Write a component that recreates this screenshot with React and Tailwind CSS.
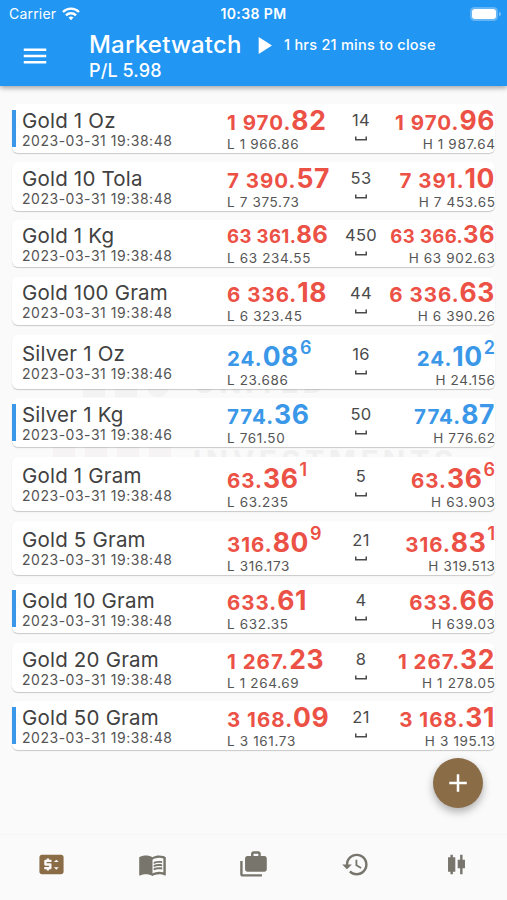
import {
  MdAdd,
  MdCandlestickChart,
  MdHistory,
  MdMenu,
  MdMenuBook,
  MdPlayArrow,
  MdPriceChange,
} from "react-icons/md";

const QUOTES = [
  { name: "Gold 1 Oz", time: "19:38:48", bid: ["1 970.", "82"], low: "1 966.86", spread: 14, ask: ["1 970.", "96"], high: "1 987.64", marked: true, box: "h-[49px] mb-[9px]" },
  { name: "Gold 10 Tola", time: "19:38:48", bid: ["7 390.", "57"], low: "7 375.73", spread: 53, ask: ["7 391.", "10"], high: "7 453.65", box: "h-[49px] mb-[9px]" },
  { name: "Gold 1 Kg", time: "19:38:48", bid: ["63 361.", "86"], low: "63 234.55", spread: 450, ask: ["63 366.", "36"], high: "63 902.63", compact: true, box: "h-[47px] mb-[10px]" },
  { name: "Gold 100 Gram", time: "19:38:48", bid: ["6 336.", "18"], low: "6 323.45", spread: 44, ask: ["6 336.", "63"], high: "6 390.26", box: "h-[48px] mb-[10px]" },
  { name: "Silver 1 Oz", time: "19:38:46", bid: ["24.", "08", "6"], low: "23.686", spread: 16, ask: ["24.", "10", "2"], high: "24.156", up: true, box: "h-[54px] mb-[9px]" },
  { name: "Silver 1 Kg", time: "19:38:46", bid: ["774.", "36"], low: "761.50", spread: 50, ask: ["774.", "87"], high: "776.62", up: true, marked: true, box: "h-[49px] mb-[10px]" },
  { name: "Gold 1 Gram", time: "19:38:48", bid: ["63.", "36", "1"], low: "63.235", spread: 5, ask: ["63.", "36", "6"], high: "63.903", box: "h-[54px] mb-[10px]" },
  { name: "Gold 5 Gram", time: "19:38:48", bid: ["316.", "80", "9"], low: "316.173", spread: 21, ask: ["316.", "83", "1"], high: "319.513", box: "h-[54px] mb-[9px]" },
  { name: "Gold 10 Gram", time: "19:38:48", bid: ["633.", "61"], low: "632.35", spread: 4, ask: ["633.", "66"], high: "639.03", marked: true, box: "h-[49px] mb-[10px]" },
  { name: "Gold 20 Gram", time: "19:38:48", bid: ["1 267.", "23"], low: "1 264.69", spread: 8, ask: ["1 267.", "32"], high: "1 278.05", box: "h-[49px] mb-[9px]" },
  { name: "Gold 50 Gram", time: "19:38:48", bid: ["3 168.", "09"], low: "3 161.73", spread: 21, ask: ["3 168.", "31"], high: "3 195.13", marked: true, box: "h-[49px]" },
];

const Price = ({ parts, up, compact }) => {
  const [whole, cents, pip] = parts;

  return (
    <div
      className={`mb-[2px] flex items-baseline whitespace-pre font-bold leading-none ${
        up ? "text-[#3b97e8]" : "text-[#ec5146]"
      }`}
    >
      <span className={compact ? "text-[18.5px] tracking-[0.4px]" : "text-[20.5px] tracking-[1px]"}>
        {whole}
      </span>
      <span className={compact ? "text-[24px] tracking-[0.4px]" : "text-[26.5px] tracking-[0.6px]"}>
        {cents}
      </span>
      {pip && <span className="relative -top-3 ml-px text-[18px] font-semibold">{pip}</span>}
    </div>
  );
};

const QuoteRow = ({ quote }) => (
  <div
    className={`flex shrink-0 rounded-md bg-white shadow-[0_1px_1px_rgba(0,0,0,0.2)] ${quote.box}`}
  >
    <div className="flex w-[215px] shrink-0 items-center">
      <div className={`h-[37px] w-1 ${quote.marked ? "bg-[#3b97e8]" : ""}`} />
      <div className="ml-1.5 whitespace-nowrap">
        <div className="text-[20.5px] leading-[23px] tracking-[0.2px] text-[#414141]">{quote.name}</div>
        <div className="text-[14px] leading-[17px] tracking-[0.52px] text-[#555]">2023-03-31 {quote.time}</div>
      </div>
    </div>

    <div className="flex w-[104px] shrink-0 flex-col items-start justify-end whitespace-nowrap">
      <Price parts={quote.bid} up={quote.up} compact={quote.compact} />
      <div className="text-[13.5px] leading-[18px] tracking-[0.65px] text-[#555]">L {quote.low}</div>
    </div>

    <div className="flex w-[60px] shrink-0 flex-col items-center justify-center pb-0.5 text-[#4a4a4a]">
      <div className="text-[16.5px] leading-[20px] tracking-[0.3px]">{quote.spread}</div>
      <svg viewBox="0 0 12 5" className="mt-[6px] mb-1 h-[5px] w-3" fill="none" stroke="currentColor" strokeWidth="1.5">
        <path d="M.75 .5V3.750H11.250V.5" />
      </svg>
    </div>

    <div className="flex min-w-0 flex-1 flex-col items-end justify-end whitespace-nowrap">
      <Price parts={quote.ask} up={quote.up} compact={quote.compact} />
      <div className="-mr-[0.6px] text-[13.5px] leading-[18px] tracking-[0.65px] text-[#555]">H {quote.high}</div>
    </div>
  </div>
);

const Header = () => (
  <header className="relative h-[86px] shrink-0 bg-[#2196f3] text-white shadow-[0_2px_5px_rgba(0,0,0,0.35)]">
    <div className="flex h-[27px] items-center justify-between pl-[9px] pr-[6px]">
      <div className="flex w-[180px] items-center gap-1.5 text-[14px] tracking-[0.2px]">
        Carrier
        <svg viewBox="0 0 18 14" className="h-[14px] w-[18px]" fill="none" stroke="currentColor" strokeWidth="2.4">
          <path d="M1 5C5.500 .5 12.500 .5 17 5" />
          <path d="M4 8.300C6.800 5.500 11.200 5.500 14 8.300" />
          <path d="M6.500 10.500Q9 8.500 11.500 10.500L9 13.200Z" fill="currentColor" stroke="none" />
        </svg>
      </div>
      <div className="text-[14px] font-semibold tracking-[0.4px]">10:38 PM</div>
      <div className="flex w-[183px] items-center justify-end">
        <div className="h-[14px] w-[28px] rounded-[4.5px] bg-white/30 p-[2px]">
          <div className="h-full rounded-[3px] bg-white" />
        </div>
        <div className="ml-px h-1 w-0.5 rounded-r bg-white/40" />
      </div>
    </div>
    <div className="flex pl-[20px] pt-px">
      <MdMenu className="mt-[13px] size-[30px]" />
      <div className="ml-[39px]">
        <div className="flex h-[34px] items-center">
          <h1 className="w-[160px] text-[24px] font-medium tracking-[0.2px]">Marketwatch</h1>
          <MdPlayArrow className="size-[29px]" />
          <span className="ml-1.5 text-[14.5px] font-medium tracking-[0.25px]">1 hrs 21 mins to close</span>
        </div>
        <div className="text-[18px] font-medium leading-[18px] tracking-[0.1px]">P/L 5.98</div>
      </div>
    </div>
  </header>
);

const Watermark = () => (
  <div className="absolute left-0 top-[369px] whitespace-nowrap font-bold text-[#f0f0f0]">
    <div className="flex h-7 items-end gap-2.5 pl-[83px]">
      <div className="h-7 w-[22px] bg-[#f3f3f3]" />
      <div className="h-7 w-[22px] bg-[#f3f3f3]" />
      <div className="h-7 w-[22px] rounded-b-full bg-[#f3f3f3]" />
      <span className="ml-[15px] text-[29px] leading-none tracking-[4px]">UNITED</span>
    </div>
    <div className="mt-[49px] flex h-8 gap-2.5 pl-[53px]">
      <div className="h-8 w-[22px] bg-[#f5f3f3]" />
      <div className="h-8 w-[22px] bg-[#f5f3f3]" />
      <div className="h-8 w-[22px] bg-[#f5f3f3]" />
      <div className="h-8 w-[22px] bg-[#f5f3f3]" />
      <span className="ml-3 text-[29px] leading-none tracking-[4.7px]">INVESTMENTS</span>
    </div>
  </div>
);

const CasesIcon = () => (
  <svg viewBox="0 0 24 24" className="size-[29px]" fill="currentColor">
    <path d="M1 9h2v11h16v2H3c-1.100 0-2-.9-2-2V9z" />
    <path
      fillRule="evenodd"
      d="M18 5V3c0-1.100-.9-2-2-2h-4c-1.100 0-2 .9-2 2v2H7c-1.100 0-2 .9-2 2v9c0 1.100.9 2 2 2h14c1.100 0 2-.9 2-2V7c0-1.100-.9-2-2-2h-3zM12 3h4v2h-4V3z"
    />
  </svg>
);

const BottomNav = () => (
  <nav className="flex h-[66px] shrink-0 items-start justify-around border-t border-[#f6f6f6] bg-[#fafafa] pt-[15px] pl-px text-[#77756c]">
    <MdPriceChange className="size-[29px] text-[#8a6c47]" />
    <MdMenuBook className="size-[29px]" />
    <CasesIcon />
    <MdHistory className="size-[29px]" />
    <MdCandlestickChart className="size-[29px]" />
  </nav>
);

const App = () => (
  <div className="relative flex h-[900px] w-[507px] flex-col overflow-hidden bg-[#fafafa] font-['Inter',sans-serif]">
    <Watermark />
    <Header />
    <main className="relative flex flex-1 flex-col px-[12px] pt-[18px]">
      {QUOTES.map((quote) => (
        <QuoteRow key={quote.name} quote={quote} />
      ))}
    </main>
    <button
      type="button"
      className="absolute left-[433px] top-[758px] flex size-[50px] items-center justify-center rounded-full bg-[#8a6c47] text-white shadow-[0_4px_8px_rgba(0,0,0,0.3)]"
    >
      <MdAdd className="size-[30px]" />
    </button>
    <BottomNav />
  </div>
);

export default App;
